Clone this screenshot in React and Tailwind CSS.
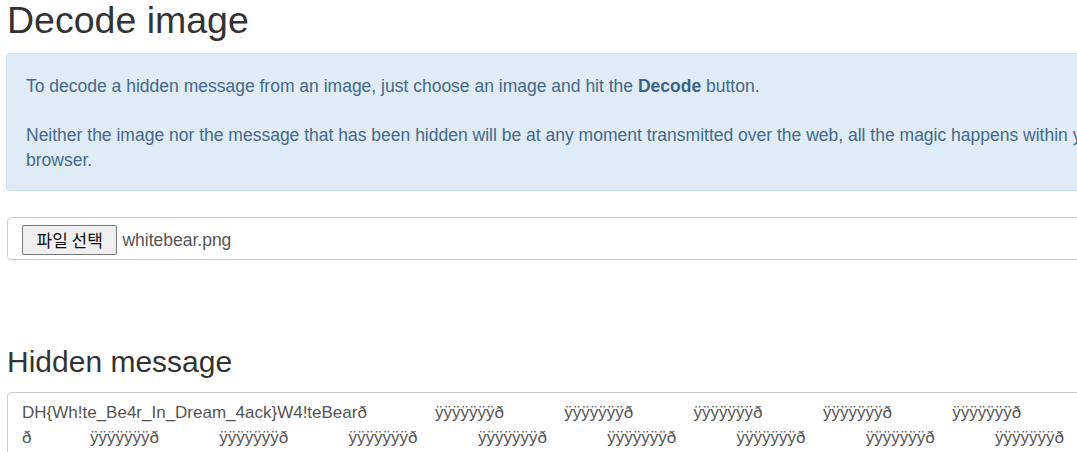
import React from 'react';

const sans = { fontFamily: '"Liberation Sans", Arial, sans-serif' };

const Y_BLOCK = 'ÿÿÿÿÿÿÿð';

const HiddenLine = ({ lead, leadWidth, count }) => (
    <div className="flex whitespace-nowrap h-[25px] leading-[25px]">
        <span className="inline-block shrink-0" style={{ width: leadWidth }}>{lead}</span>
        {Array.from({ length: count }).map((_, i) => (
            <span key={i} className="inline-block shrink-0 w-[129.3px]">{Y_BLOCK}</span>
        ))}
    </div>
);

export default function App() {
    return (
        <div className="w-[1077px] h-[452px] overflow-hidden bg-white text-[#333]" style={sans}>
            <div className="w-[1180px] pl-[7px]">
                {/* Judul */}
                <h1 className="text-[37.5px] leading-[1.1] font-normal m-0 text-[#333]">Decode image</h1>

                {/* Kotak info */}
                <div className="mt-[12px] -ml-px w-[1155px] h-[138px] bg-[#dfebf5] border border-[#cbe0ee] rounded-[4px] py-[20px] pl-[19px] pr-[20px] text-[17.5px] leading-[24.5px] text-[#44698c]">
                    <p>
                        To decode a hidden message from an image, just choose an image and hit the <b className="font-bold text-[#3c6488]">Decode</b> button.
                    </p>
                    <p className="mt-[24.5px]">
                        Neither the image nor the message that has been hidden will be at any moment transmitted over the web, all the magic happens within your browser.
                    </p>
                </div>

                {/* Input file */}
                <div className="mt-[26px] w-[1155px] h-[43px] border border-[#ccc] rounded-[4px] flex items-center pl-[14px] pt-[2px]">
                    <button
                        type="button"
                        className="h-[30px] px-[13.5px] bg-[#efefef] border border-[#767676] rounded-[2px] text-[17px] leading-none text-[#111] font-normal"
                        style={{ fontFamily: '"Noto Sans CJK KR", sans-serif' }}
                    >
                        파일 선택
                    </button>
                    <span className="ml-[5px] text-[17.5px] text-[#555]">whitebear.png</span>
                </div>

                {/* Pesan tersembunyi */}
                <h2 className="mt-[85px] text-[30px] leading-[1.1] font-normal text-[#333]">Hidden message</h2>

                <div className="mt-[14px] w-[1155px] h-[120px] border border-[#ccc] rounded-[4px] pt-[7px] pl-[14px] text-[17px] text-[#555] overflow-hidden">
                    <HiddenLine lead="DH{Wh!te_Be4r_In_Dream_4ack}W4!teBearð" leadWidth={413} count={6} />
                    <HiddenLine lead="ð" leadWidth={68} count={9} />
                </div>
            </div>
        </div>
    );
}
